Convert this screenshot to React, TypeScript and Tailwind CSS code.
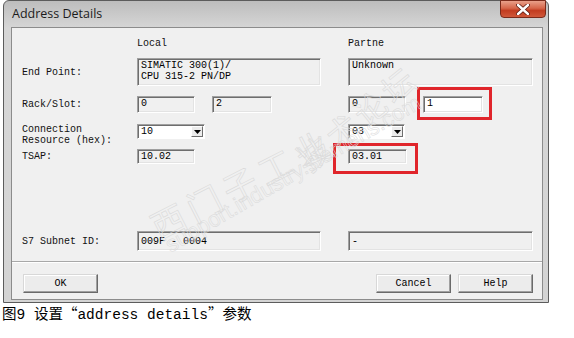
import React from "react";

const mono = { fontFamily: '"Liberation Mono", "DejaVu Sans Mono", monospace' };

// sunken read-only edit box (windows classic look)
function Edit({
  w,
  h,
  white,
  children,
}: {
  w: string;
  h: string;
  white?: boolean;
  children?: React.ReactNode;
}) {
  return (
    <div
      className={`${w} ${h} ${white ? "bg-white" : "bg-[#f0f0f0]"} border border-t-[#a0a0a0] border-l-[#a0a0a0] border-b-white border-r-white shadow-[inset_1px_1px_0_#6e6e6e,inset_-1px_-1px_0_#e3e3e3] pl-[3px] pt-[1px] text-[10px] leading-[11px] text-black overflow-hidden`}
    >
      {children}
    </div>
  );
}

function Combo({ w, value }: { w: string; value: string }) {
  return (
    <div
      className={`${w} h-[15px] bg-white border border-t-[#a0a0a0] border-l-[#a0a0a0] border-b-white border-r-white shadow-[inset_1px_1px_0_#6e6e6e] flex items-stretch`}
    >
      <div className="flex-1 pl-[3px] text-[10px] leading-[13px] text-black">{value}</div>
      <div className="w-[12px] my-[1px] mr-[1px] bg-[#ececec] border border-t-white border-l-white border-b-[#6e6e6e] border-r-[#6e6e6e] flex items-center justify-center">
        <svg width="7" height="4" viewBox="0 0 7 4">
          <path d="M0 0 H7 L3.5 4 Z" fill="#000" />
        </svg>
      </div>
    </div>
  );
}

function Btn({ label }: { label: string }) {
  return (
    <div className="w-[75px] h-[19px] bg-[#ececec] border border-t-[#d8d8d8] border-l-[#d8d8d8] border-b-[#6a6a6a] border-r-[#6a6a6a] shadow-[inset_-1px_-1px_0_#a0a0a0,inset_1px_1px_0_#ffffff] flex items-center justify-center text-[10px] text-black">
      {label}
    </div>
  );
}

function Label({ children }: { children: React.ReactNode }) {
  return <div className="w-[115px] text-[10px] leading-[11px] text-[#111]">{children}</div>;
}

export default function App() {
  return (
    <div className="w-[574px] h-[338px] bg-white overflow-hidden relative">
      {/* dialog window */}
      <div className="ml-[3px] w-[546px] h-[303px] flex flex-col rounded-t-[6px] border border-[#5c5c5c] bg-[linear-gradient(to_bottom,#bdbdbd_0px,#d6d6d6_27px,#d4d4d4_100%)]">
        {/* title bar */}
        <div className="h-[26px] flex items-start justify-between">
          <div
            className="pl-[8px] pt-[5px] text-[12.5px] leading-[16px] text-[#1c1c1c]"
            style={{ fontFamily: '"Open Sans", "Noto Sans", sans-serif' }}
          >
            Address Details
          </div>
          <div className="mr-[2px] -mt-[1px] w-[46px] h-[18px] rounded-b-[4px] border border-[#7a2a1a] bg-[linear-gradient(to_bottom,#e9a08a_0%,#d6664a_45%,#c23c20_60%,#d0583a_100%)] flex items-center justify-center">
            <svg width="14" height="11" viewBox="0 0 14 11">
              <path
                d="M2 1 L12 10 M12 1 L2 10"
                stroke="#5a1a10"
                strokeWidth="4"
                strokeLinecap="round"
              />
              <path
                d="M2 1 L12 10 M12 1 L2 10"
                stroke="#ffffff"
                strokeWidth="2.4"
                strokeLinecap="round"
              />
            </svg>
          </div>
        </div>

        {/* client area */}
        <div
          className="relative ml-[7px] mr-[5px] h-[273px] border border-[#8c8c8c] bg-[#f0f0f0] pl-[10px] pt-[10px] overflow-hidden"
          style={mono}
        >
          <div className="relative flex flex-col">
            {/* header */}
            <div className="flex h-[12px] text-[10px] leading-[12px] text-[#111]">
              <div className="w-[115px]" />
              <div className="w-[211px]">Local</div>
              <div>Partne</div>
            </div>

            {/* end point */}
            <div className="flex items-center mt-[8px]">
              <Label>End Point:</Label>
              <Edit w="w-[184px]" h="h-[28px]">
                SIMATIC 300(1)/
                <br />
                CPU 315-2 PN/DP
              </Edit>
              <div className="w-[27px]" />
              <Edit w="w-[185px]" h="h-[28px]">
                Unknown
              </Edit>
            </div>

            {/* rack / slot */}
            <div className="flex items-center mt-[10px]">
              <Label>Rack/Slot:</Label>
              <div className="w-[211px] flex gap-[17px]">
                <Edit w="w-[58px]" h="h-[17px]">
                  0
                </Edit>
                <Edit w="w-[60px]" h="h-[17px]">
                  2
                </Edit>
              </div>
              <div className="flex gap-[17px]">
                <Edit w="w-[58px]" h="h-[17px]">
                  0
                </Edit>
                <div className="relative">
                  <Edit w="w-[60px]" h="h-[17px]" white>
                    1
                  </Edit>
                  <div className="absolute -left-[6px] -top-[9px] -right-[9px] -bottom-[7px] border-[3px] border-[#e0252b]" />
                </div>
              </div>
            </div>

            {/* connection resource */}
            <div className="flex items-start mt-[11px]">
              <Label>
                Connection
                <br />
                Resource (hex):
              </Label>
              <div className="w-[211px]">
                <Combo w="w-[68px]" value="10" />
              </div>
              <Combo w="w-[57px]" value="03" />
            </div>

            {/* tsap */}
            <div className="flex items-center mt-[3px]">
              <Label>TSAP:</Label>
              <div className="w-[211px]">
                <Edit w="w-[58px]" h="h-[15px]">
                  10.02
                </Edit>
              </div>
              <div className="relative">
                <Edit w="w-[59px]" h="h-[15px]">
                  03.01
                </Edit>
                <div className="absolute -left-[15px] -top-[6px] -right-[11px] -bottom-[10px] border-[3px] border-[#e0252b]" />
              </div>
            </div>

            {/* subnet */}
            <div className="flex items-center mt-[67px]">
              <Label>S7 Subnet ID:</Label>
              <Edit w="w-[184px]" h="h-[20px]">
                <div className="pt-[3px]">009F - 0004</div>
              </Edit>
              <div className="w-[27px]" />
              <Edit w="w-[185px]" h="h-[20px]">
                <div className="pt-[3px]">-</div>
              </Edit>
            </div>
          </div>

          {/* separator */}
          <div className="relative -ml-[10px] mt-[10px] h-[2px] border-t border-t-[#a8a8a8] border-b border-b-white" />

          {/* buttons */}
          <div className="relative flex mt-[11px] pl-[1px] pr-[9px]">
            <Btn label="OK" />
            <div className="flex-1" />
            <div className="flex gap-[7px]">
              <Btn label="Cancel" />
              <Btn label="Help" />
            </div>
          </div>

          {/* watermark, drawn faintly over the dialog */}
          <div
            className="absolute z-10 left-[230px] top-[155px] -translate-x-1/2 -translate-y-1/2 -rotate-[27deg] whitespace-nowrap text-[34px] leading-none tracking-[6px] text-transparent [-webkit-text-stroke:0.6px_#dadada] pointer-events-none"
            style={{ fontFamily: '"Noto Sans CJK SC", sans-serif' }}
          >
            西门子工业
          </div>
          <div
            className="absolute z-10 left-[345px] top-[89px] -translate-x-1/2 -translate-y-1/2 -rotate-[39deg] whitespace-nowrap text-[32px] leading-none tracking-[4px] text-transparent [-webkit-text-stroke:0.6px_#dadada] pointer-events-none"
            style={{ fontFamily: '"Noto Sans CJK SC", sans-serif' }}
          >
            技术论坛
          </div>
          <div
            className="absolute z-10 left-[281px] top-[146px] -translate-x-1/2 -translate-y-1/2 -rotate-[30deg] whitespace-nowrap text-[22px] leading-none text-transparent [-webkit-text-stroke:0.5px_#dadada] pointer-events-none"
            style={{ fontFamily: '"Liberation Sans", sans-serif' }}
          >
            support.industry.siemens.com
          </div>
        </div>
      </div>

      {/* caption */}
      <div
        className="mt-[2px] pl-[2px] text-[14.5px] leading-[16px] text-black"
        style={{ fontFamily: '"Liberation Mono", "Noto Sans CJK SC", monospace' }}
      >
        <span style={{ fontFamily: '"Noto Sans CJK SC", sans-serif' }}>图</span>9{" "}
        <span style={{ fontFamily: '"Noto Sans CJK SC", sans-serif' }}>设置“</span>address details
        <span style={{ fontFamily: '"Noto Sans CJK SC", sans-serif' }}>”参数</span>
      </div>
    </div>
  );
}
